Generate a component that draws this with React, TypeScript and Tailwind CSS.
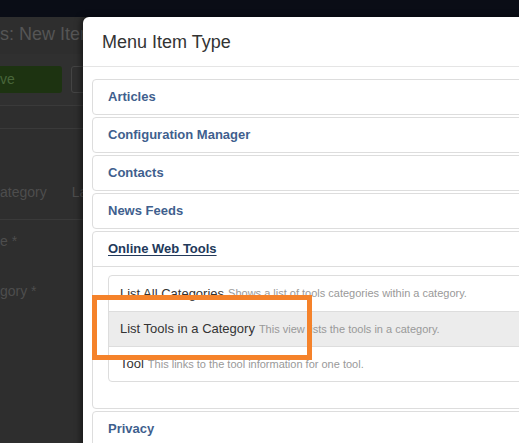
import React from "react";

const groups = ["Articles", "Configuration Manager", "Contacts", "News Feeds"];

const tools = [
  { title: "List All Categories", desc: "Shows a list of tools categories within a category.", active: false },
  { title: "List Tools in a Category", desc: "This view lists the tools in a category.", active: true },
  { title: "Tool", desc: "This links to the tool information for one tool.", active: false },
];

export default function App() {
  return (
    <div className="relative w-[519px] h-[443px] overflow-hidden bg-[#2e2e2e] font-['Liberation_Sans',Arial,sans-serif]">
      {/* page behind the dimmed backdrop */}
      <div className="h-[17px] bg-[#0a0d16]" />
      <div className="h-[37px] flex items-center text-[18px] text-[#555] leading-none pb-[4px]">
        s: New Item
      </div>
      <div className="h-[51px] flex items-center gap-[9px] bg-[#303030]">
        <div className="w-[62px] h-[27px] bg-[#1d3311] rounded-r-[3px] flex items-center text-[14px] text-[#48663a]">
          ve
        </div>
        <div className="w-[40px] h-[27px] border border-[#444] bg-[#2f2f2f] rounded-[3px]" />
      </div>
      <div className="h-[24px] border-y border-[#3a3a3a]" />
      <div className="h-[91px] flex items-end pb-[16px] gap-[25px] text-[14px] text-[#4d4d4d] border-b border-[#3a3a3a]">
        <span>ategory</span>
        <span>La</span>
      </div>
      <div className="pt-[11px] text-[14px] text-[#4d4d4d]">
        <div>e *</div>
        <div className="mt-[29px]">gory *</div>
      </div>

      {/* modal */}
      <div className="absolute left-[83px] top-[17px] w-[620px] h-[520px] bg-white rounded-tl-[6px] shadow-[-2px_0_6px_rgba(0,0,0,0.5)]">
        <div className="h-[50px] px-[19px] pt-[2px] flex items-center border-b border-[#e5e5e5] text-[18px] text-[#333]">
          Menu Item Type
        </div>
        <div className="pt-[12px] pl-[9px] flex flex-col gap-[2px]">
          {groups.map((g) => (
            <div key={g} className="border border-[#ddd] rounded-[4px] px-[15px] h-[36px] flex items-center text-[13px] font-bold text-[#3f5f8e]">
              {g}
            </div>
          ))}
          <div className="border border-[#ddd] rounded-[4px]">
            <div className="px-[15px] h-[34px] flex items-center text-[13px] font-bold text-[#22395a] underline underline-offset-2">
              Online Web Tools
            </div>
            <div className="border-t border-[#ddd] pt-[8px] pb-[26px] px-[15px]">
              <div className="border border-[#ddd] rounded-[4px]">
                {tools.map((t, i) => (
                  <div
                    key={t.title}
                    className={`h-[35px] px-[11px] flex items-center gap-[4px] whitespace-nowrap ${i > 0 ? "border-t border-[#ddd]" : ""} ${t.active ? "bg-[#ececec]" : ""}`}
                  >
                    <span className="text-[13px] text-[#333]">{t.title}</span>
                    <span className="text-[11px] text-[#999]">{t.desc}</span>
                  </div>
                ))}
              </div>
            </div>
          </div>
          <div className="border border-[#ddd] rounded-[4px] px-[15px] h-[36px] flex items-center text-[13px] font-bold text-[#3f5f8e]">
            Privacy
          </div>
        </div>
      </div>

      {/* highlight */}
      <div className="absolute left-[92px] top-[295px] w-[220px] h-[65px] border-[5px] border-[#f5822a]" />
    </div>
  );
}
